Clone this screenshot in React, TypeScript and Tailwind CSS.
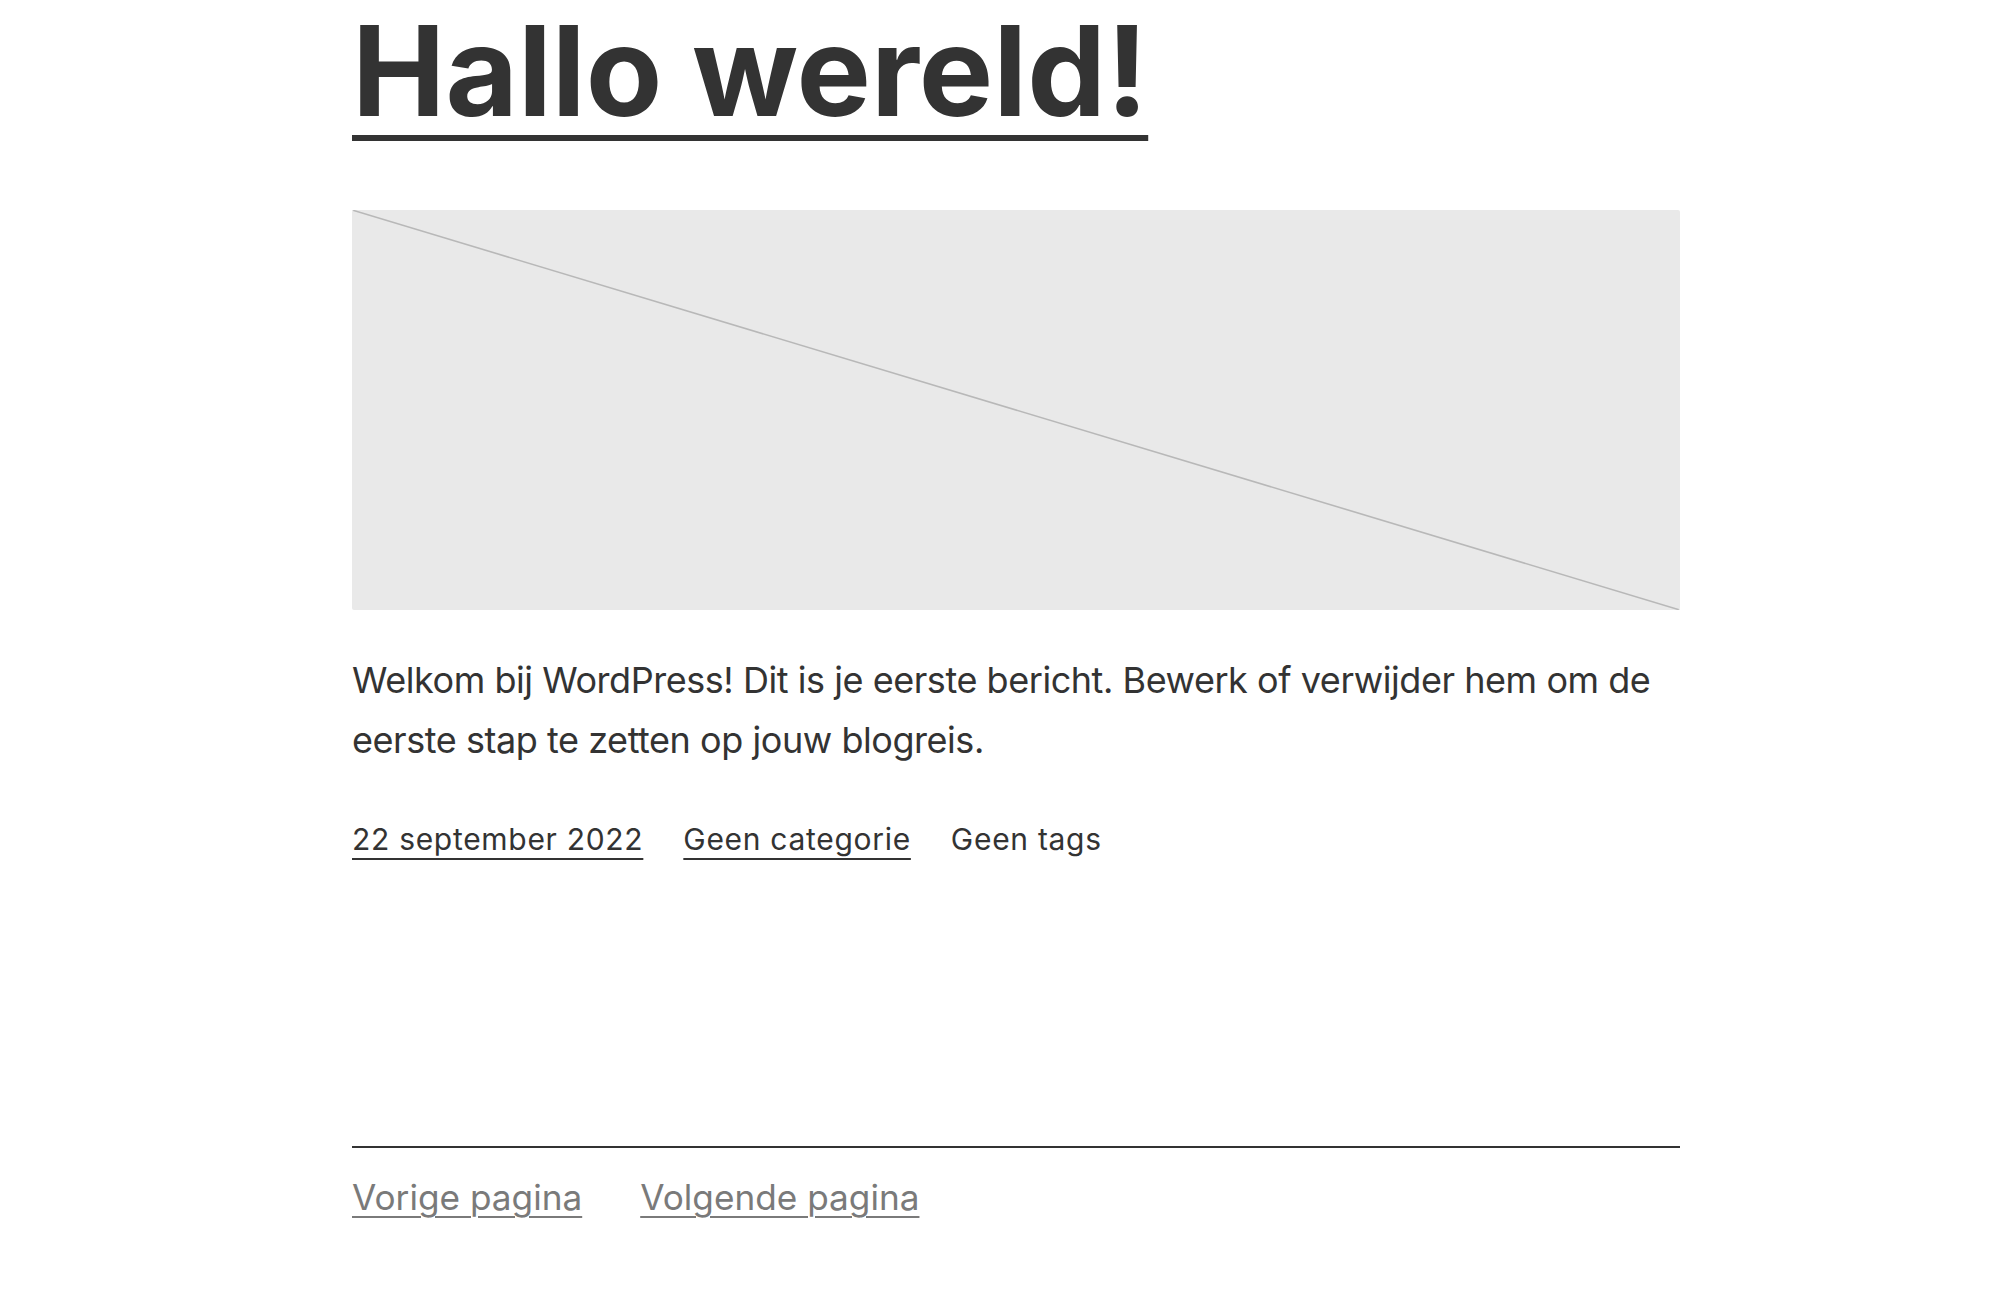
const font = {fontFamily: "Inter, 'Liberation Sans', sans-serif"}

function Placeholder() {
    return <div className="relative w-full h-[400px] bg-[#e9e9e9] rounded-[2px] overflow-hidden">
        <svg className="absolute inset-0 w-full h-full" viewBox="0 0 1328 400" preserveAspectRatio="none">
            <line x1="0" y1="0" x2="1328" y2="400" stroke="#b8b8b8" strokeWidth="1.6"/>
        </svg>
    </div>
}

export default function App() {
    return <div className="min-h-[1292px] bg-white text-[#333333]" style={font}>
        <div className="ml-[352px] w-[1328px] flex flex-col">
            <h1 className="mt-[8px] text-[125px] leading-[125px] font-bold">
                <a href="#" className="underline decoration-[6px] underline-offset-[19px]">Hallo wereld!</a>
            </h1>

            <div className="mt-[77px]">
                <Placeholder/>
            </div>

            <p className="mt-[40px] text-[36px] leading-[60px] tracking-[-0.45px]">
                Welkom bij WordPress! Dit is je eerste bericht. Bewerk of verwijder hem om de eerste stap te zetten op jouw blogreis.
            </p>

            <div className="mt-[46px] flex gap-[40px] text-[30px] leading-[46px] tracking-[0.7px]">
                <a href="#" className="underline decoration-[2px] underline-offset-[8px]">22 september 2022</a>
                <a href="#" className="underline decoration-[2px] underline-offset-[8px]">Geen categorie</a>
                <span>Geen tags</span>
            </div>

            <div className="mt-[284px] border-t-2 border-[#333333]"/>

            <nav className="mt-[21px] flex gap-[58px] text-[35.2px] leading-[57.6px] text-[#7a7a7a]">
                <a href="#" className="underline decoration-[2px] underline-offset-[6px]">Vorige pagina</a>
                <a href="#" className="underline decoration-[2px] underline-offset-[6px]">Volgende pagina</a>
            </nav>
        </div>
    </div>
}
